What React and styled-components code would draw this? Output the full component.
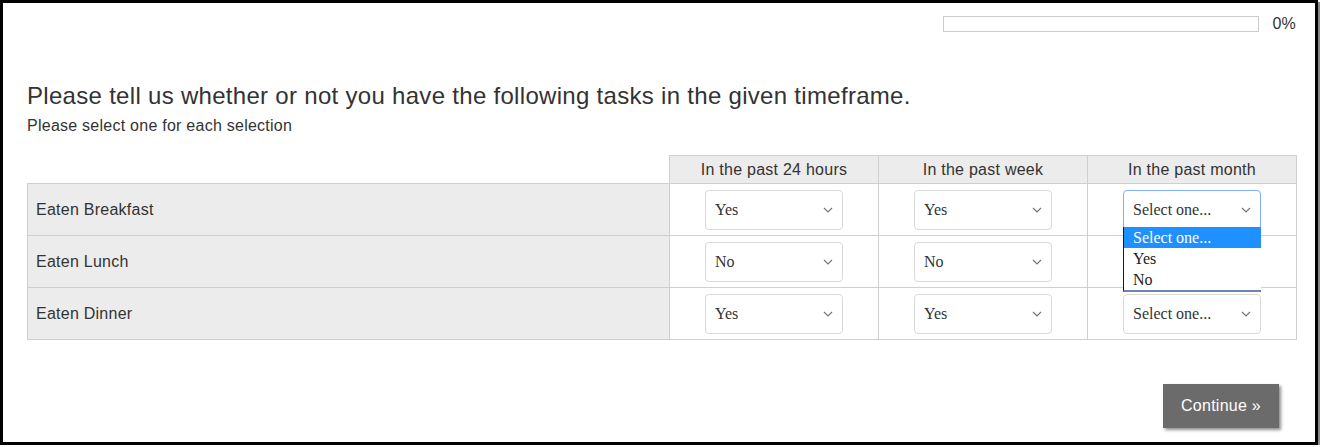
import styled, { createGlobalStyle } from "styled-components";

const GlobalStyle = createGlobalStyle`
  html, body {
    margin: 0;
    padding: 0;
    background: #fff;
  }
  body {
    font-family: "Liberation Sans", Arial, sans-serif;
    color: #333;
  }
`;

const Frame = styled.div`
  width: 1318px;
  height: 445px;
  box-sizing: border-box;
  border: 3px solid #000;
  box-shadow: 2px 2px 0 #8a8a8a;
  padding: 13px 19px 0 24px;
  display: flex;
  flex-direction: column;
  letter-spacing: 0.25px;
`;

const ProgressRow = styled.div`
  display: flex;
  justify-content: flex-end;
  align-items: center;
  gap: 13px;
  height: 16px;
`;

const ProgressBar = styled.div`
  width: 316px;
  height: 16px;
  box-sizing: border-box;
  border: 1px solid #ccc;
  background: #fff;
`;

const ProgressLabel = styled.span`
  font-size: 16px;
  line-height: 16px;
  color: #333;
`;

const Title = styled.h1`
  margin: 49px 0 0;
  font-size: 24px;
  line-height: 29px;
  font-weight: 400;
  letter-spacing: 0.3px;
  color: #333;
`;

const Subtitle = styled.p`
  margin: 6px 0 0;
  font-size: 16px;
  line-height: 20px;
  color: #333;
`;

const Grid = styled.table`
  margin-top: 19px;
  width: 1269px;
  border-collapse: collapse;
  table-layout: fixed;
`;

const HeadCell = styled.th`
  height: 27px;
  padding: 0;
  font-size: 16px;
  font-weight: 400;
  color: #333;
  text-align: center;
  background: ${(p) => (p.$blank ? "transparent" : "#ececec")};
  border: ${(p) => (p.$blank ? "none" : "1px solid #cfcfcf")};
  border-bottom: 1px solid #cfcfcf;
`;

const LabelCell = styled.td`
  height: 51px;
  padding: 0 0 0 8px;
  font-size: 16px;
  color: #333;
  background: #ececec;
  border: 1px solid #cfcfcf;
`;

const OptionCell = styled.td`
  height: 51px;
  padding: 0;
  text-align: center;
  border: 1px solid #cfcfcf;
  background: #fff;
`;

const SelectWrap = styled.div`
  position: relative;
  display: inline-block;
  width: 138px;
  height: 40px;
  vertical-align: middle;
  letter-spacing: 0;
`;

const Select = styled.select`
  appearance: none;
  width: 100%;
  height: 100%;
  box-sizing: border-box;
  padding: 0 24px 0 9px;
  border: 1px solid ${(p) => (p.$focus ? "#80adff" : "#d9d9d9")};
  border-radius: 4px;
  background: #fff;
  font-family: "Liberation Serif", "Times New Roman", serif;
  font-size: 16px;
  color: #333;
  outline: none;
`;

const Chevron = styled.svg`
  position: absolute;
  right: 10px;
  top: 17px;
  width: 10px;
  height: 6px;
  pointer-events: none;
`;

const DropList = styled.ul`
  position: absolute;
  left: 0;
  top: 37px;
  width: 138px;
  margin: 0;
  padding: 0;
  list-style: none;
  box-sizing: border-box;
  border-left: 1px solid #1a1a1a;
  border-bottom: 2px solid #6b85b5;
  background: #fff;
  text-align: left;
  z-index: 2;
`;

const DropItem = styled.li`
  height: 21px;
  line-height: 21px;
  padding-left: 9px;
  font-family: "Liberation Serif", "Times New Roman", serif;
  font-size: 16px;
  color: ${(p) => (p.$active ? "#fff" : "#222")};
  background: ${(p) => (p.$active ? "#1e90ff" : "#fff")};
`;

const Footer = styled.div`
  display: flex;
  justify-content: flex-end;
  margin-top: 44px;
  width: 1269px;
  padding-right: 17px;
  box-sizing: border-box;
`;

const ContinueButton = styled.button`
  width: 116px;
  height: 44px;
  border: none;
  background: #6b6b6b;
  color: #fff;
  font-family: "Liberation Sans", Arial, sans-serif;
  font-size: 16px;
  letter-spacing: 0.25px;
  box-shadow: 2px 2px 3px rgba(0, 0, 0, 0.45);
  cursor: pointer;
`;

const columns = ["In the past 24 hours", "In the past week", "In the past month"];

const rows = [
  { label: "Eaten Breakfast", values: ["Yes", "Yes", ""] },
  { label: "Eaten Lunch", values: ["No", "No", null] },
  { label: "Eaten Dinner", values: ["Yes", "Yes", ""] },
];

const ChoiceSelect = ({ value, open }) => (
  <SelectWrap>
    <Select defaultValue={value} $focus={open}>
      <option value="">Select one...</option>
      <option value="Yes">Yes</option>
      <option value="No">No</option>
    </Select>
    <Chevron viewBox="0 0 10 6">
      <path d="M1 1l4 4 4-4" fill="none" stroke="#777" strokeWidth="1.2" />
    </Chevron>
    {open && (
      <DropList>
        <DropItem $active>Select one...</DropItem>
        <DropItem>Yes</DropItem>
        <DropItem>No</DropItem>
      </DropList>
    )}
  </SelectWrap>
);

const App = () => {
  return (
    <>
      <GlobalStyle />
      <Frame>
        <ProgressRow>
          <ProgressBar />
          <ProgressLabel>0%</ProgressLabel>
        </ProgressRow>
        <Title>Please tell us whether or not you have the following tasks in the given timeframe.</Title>
        <Subtitle>Please select one for each selection</Subtitle>
        <Grid>
          <colgroup>
            <col style={{ width: 642 }} />
            <col style={{ width: 209 }} />
            <col style={{ width: 209 }} />
            <col style={{ width: 209 }} />
          </colgroup>
          <thead>
            <tr>
              <HeadCell $blank />
              {columns.map((c) => (
                <HeadCell key={c}>{c}</HeadCell>
              ))}
            </tr>
          </thead>
          <tbody>
            {rows.map((r, ri) => (
              <tr key={r.label}>
                <LabelCell>{r.label}</LabelCell>
                {r.values.map((v, ci) => (
                  <OptionCell key={ci}>
                    {v !== null && <ChoiceSelect value={v} open={ri === 0 && ci === 2} />}
                  </OptionCell>
                ))}
              </tr>
            ))}
          </tbody>
        </Grid>
        <Footer>
          <ContinueButton>Continue »</ContinueButton>
        </Footer>
      </Frame>
    </>
  );
};

export default App;
